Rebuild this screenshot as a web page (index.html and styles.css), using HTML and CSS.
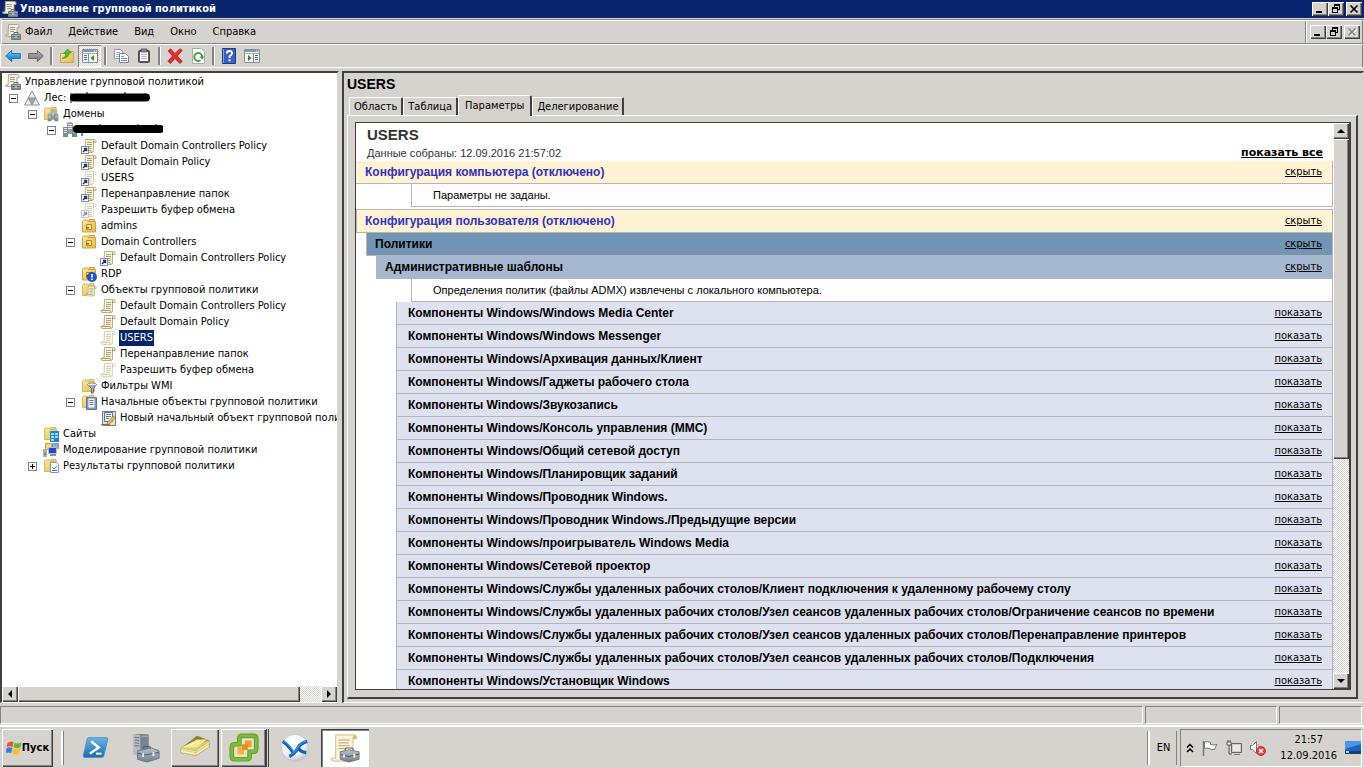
FILE: index.html
```html
<!DOCTYPE html>
<html lang="ru">
<head>
<meta charset="utf-8">
<title>Управление групповой политикой</title>
<link rel="stylesheet" href="styles.css">
</head>
<body>
<svg class="sprite" aria-hidden="true">
  <defs>
    <linearGradient id="gBlue" x1="0" y1="0" x2="0" y2="1"><stop offset="0" stop-color="#8fd6fb"/><stop offset=".5" stop-color="#2f9fe6"/><stop offset="1" stop-color="#0f6cb8"/></linearGradient>
    <linearGradient id="gGray" x1="0" y1="0" x2="0" y2="1"><stop offset="0" stop-color="#b5b5b5"/><stop offset="1" stop-color="#777"/></linearGradient>
    <linearGradient id="gFold" x1="0" y1="0" x2="1" y2="1"><stop offset="0" stop-color="#fbeaa5"/><stop offset="1" stop-color="#e2b74a"/></linearGradient>
    <linearGradient id="gSteel" x1="0" y1="0" x2="0" y2="1"><stop offset="0" stop-color="#b9c4cc"/><stop offset="1" stop-color="#6f7f8c"/></linearGradient>
    <linearGradient id="gPs" x1="0" y1="0" x2="0" y2="1"><stop offset="0" stop-color="#6fb4e2"/><stop offset="1" stop-color="#1a6aae"/></linearGradient>
    <radialGradient id="gBall" cx=".4" cy=".3" r=".8"><stop offset="0" stop-color="#fff"/><stop offset=".6" stop-color="#f0f1f3"/><stop offset="1" stop-color="#a9adb3"/></radialGradient>
  </defs>
  <symbol id="scroll" viewBox="0 0 16 16">
    <path d="M4.500 1.500h9q1.500 0 1.500 1.500v1.500h-2.500v8q0 2-1.500 2H3q-2 0-2-1.500V12h3z" fill="#fbf3d0" stroke="#b5ac88"/>
    <path d="M1.500 12.500h8.500q-.2 1.500 1 2" fill="none" stroke="#b5a05a"/>
    <path d="M6 4.500h5M6 6.500h5M6 8.500h4.500M6 10.500h4.500" stroke="#a5a294"/>
    <path d="M12.500 2.500v2" stroke="#8b825e"/>
  </symbol>
  <symbol id="gpmc" viewBox="0 0 16 16">
    <path d="M3.500.500h9q1.500 0 1.500 1.500v1.500h-2v9h-10q-1.500 0-1.500-1.500V11h2.500z" fill="#f7f1dc" stroke="#a8a394"/>
    <path d="M5 3.500h5M5 5.500h5M5 7.500h4" stroke="#9f9b90"/>
    <path d="M6.500 10.500h9v5h-9z" fill="url(#gSteel)" stroke="#6d7a85"/>
    <path d="M9 10V8.500h4V10" fill="none" stroke="#5f6b75"/>
    <path d="M7 12.500h8" stroke="#5b6670"/><path d="M10.500 12h1v2h-1z" fill="#f3f3f3"/>
  </symbol>
  <symbol id="link" viewBox="0 0 16 16">
    <rect x=".5" y="8.500" width="7" height="7" fill="#fff" stroke="#8d8d9a"/>
    <path d="M2 14l3-3M2.800 10.500h2.700v2.700" fill="none" stroke="#1d2d8c" stroke-width="1.500"/>
  </symbol>
  <symbol id="folder" viewBox="0 0 16 16">
    <path d="M1.500 3.500l1-1.500h4l1 1.500h6v10h-12z" fill="url(#gFold)" stroke="#d6b561"/>
    <path d="M8 1.500h5v2h-5z" fill="#f0d683" stroke="#d6b561"/>
  </symbol>
  <symbol id="ou" viewBox="0 0 16 16">
    <path d="M1.500 3.500l1-1.500h4l1 1.500h7v10.500h-13z" fill="url(#gFold)" stroke="#cfa23c"/>
    <path d="M8 1.500h5.500v2H8z" fill="#f0d683" stroke="#cfa23c"/>
    <path d="M5.500 6.500h5v5h-5z" fill="#fbe28a" stroke="#b38a1c"/><path d="M5 9h3v1.500H5z" fill="#8f6a10"/>
  </symbol>
  <symbol id="towers" viewBox="0 0 16 16">
    <path d="M5 1l3-1 3 1v11H5z" fill="#8d9ba3"/><path d="M6 2.500h4M6 4.500h4M6 6.500h4" stroke="#e8f0f2"/>
    <path d="M1 5h5v10H1z" fill="#7d8d96"/><path d="M2 6.500h3M2 8.500h3M2 10.500h3" stroke="#dbe8ea"/>
    <path d="M10 5h5v10h-5z" fill="#71828b"/><path d="M11 6.500h3M11 8.500h3M11 10.500h3" stroke="#dbe8ea"/>
    <path d="M3 12h2v2H3zM12 12h2v2h-2z" fill="#3fc43c"/>
  </symbol>
  <symbol id="pane" viewBox="0 0 16 16">
    <path d="M.5 1.500h15v13H.5z" fill="#f7f7f5" stroke="#8a9099"/><path d="M1 2h14v2H1z" fill="#7d98bd"/><path d="M1 5.500h14" stroke="#a9aeb5"/>
    <path d="M12 3h1M14 3h1" stroke="#fff"/>
  </symbol>
  <symbol id="restore" viewBox="0 0 10 10">
    <path d="M3.500 1v2M8.500 1v5M6.500 5.500h2M1.500 4v5M6.500 4v5M1 8.500h6" fill="none" stroke="#000"/><path d="M3 0h6v2H3zM1 3h6v2H1z"/>
  </symbol>
</svg>

<div class="window">
  <header class="titlebar">
    <svg class="ic"><use href="#gpmc"/></svg>
    <h1>Управление групповой политикой</h1>
    <div class="winbtns">
      <button class="wb" aria-label="Свернуть"><svg viewBox="0 0 10 10"><path d="M1 7h6v2H1z"/></svg></button>
      <button class="wb" aria-label="Восстановить"><svg viewBox="0 0 10 10"><use href="#restore"/></svg></button>
      <button class="wb apart" aria-label="Закрыть"><svg viewBox="0 0 10 10"><path d="M1.500 1.500l7 7M8.500 1.500l-7 7" stroke="#000" stroke-width="1.700"/></svg></button>
    </div>
  </header>

  <div class="menubar">
    <svg class="ic"><use href="#gpmc"/></svg>
    <nav class="menus">
      <button>Файл</button><button>Действие</button><button>Вид</button><button>Окно</button><button>Справка</button>
    </nav>
    <div class="winbtns mdi">
      <button class="wb" aria-label="Свернуть окно"><svg viewBox="0 0 10 10"><path d="M1 7h6v2H1z"/></svg></button>
      <button class="wb" aria-label="Восстановить окно"><svg viewBox="0 0 10 10"><use href="#restore"/></svg></button>
      <button class="wb apart" aria-label="Закрыть окно" disabled><svg viewBox="0 0 10 10"><path d="M2.500 2.500l7 7M9.500 2.500l-7 7" stroke="#fff" stroke-width="1.500"/><path d="M1.500 1.500l7 7M8.500 1.500l-7 7" stroke="#808080" stroke-width="1.500"/></svg></button>
    </div>
  </div>

  <div class="toolbar">
    <button aria-label="Назад"><svg class="ic" viewBox="0 0 16 16"><path d="M.7 8l6-5.500v3h8.600v5H6.700v3z" fill="url(#gBlue)" stroke="#1d74b5"/></svg></button>
    <button aria-label="Вперед"><svg class="ic" viewBox="0 0 16 16"><path d="M15.300 8l-6-5.500v3H.7v5h8.600v3z" fill="url(#gGray)" stroke="#666"/></svg></button>
    <span class="sep"></span>
    <button aria-label="Вверх"><svg class="ic" viewBox="0 0 16 16"><path d="M1.500 5.500h6l1-2h6v11h-13z" fill="url(#gFold)" stroke="#c9a655"/><path d="M3 10.500q4-1 4-5H4.500L8.500 1l4 4h-2.300Q10 10 3 10.500z" fill="#58b72f" stroke="#3f9626" stroke-width=".7"/></svg></button>
    <button class="pressed" aria-label="Дерево консоли"><svg class="ic" viewBox="0 0 16 16"><use href="#pane"/><path d="M6.500 6v8" stroke="#8a9099"/><path d="M2 7.500h3M2 9.500h3M2 11.500h3" stroke="#4776b5"/><path d="M12 7v6L8.500 10z" fill="#23912a"/></svg></button>
    <span class="sep"></span>
    <button aria-label="Копировать"><svg class="ic" viewBox="0 0 16 16"><path d="M1.500 1.500h6l2 2v7h-8z" fill="#fff" stroke="#8c97a8"/><path d="M3 4.500h4M3 6.500h5M3 8.500h5" stroke="#9db2cf"/><path d="M6.500 5.500h6l3 3v6h-9z" fill="#fff" stroke="#77869c"/><path d="M8 8.500h3M8 10.500h6M8 12.500h6" stroke="#6c8fc2"/></svg></button>
    <button aria-label="Вставить"><svg class="ic" viewBox="0 0 16 16"><rect x="2.500" y="2.500" width="11" height="12" rx="1" fill="#5e5e60" stroke="#4d4d4f"/><path d="M4 4h8v9H4z" fill="#f4f4f4"/><path d="M5.500 6.500h5M5.500 8.500h5M5.500 10.500h5" stroke="#b6b6b6"/><path d="M5 1h6v3H5z" fill="#8a8a8a" stroke="#444" stroke-width=".7"/></svg></button>
    <span class="sep"></span>
    <button aria-label="Удалить"><svg class="ic" viewBox="0 0 16 16"><path d="M1 3l2.500-2.200L8 5.500 13 .7 15.300 2.500 10.300 8l5 5.300-2.500 2.200L8 10.500l-4.500 5L.8 13.200 5.500 8z" fill="#e3302e" stroke="#a81512" stroke-width=".7"/></svg></button>
    <button aria-label="Обновить"><svg class="ic" viewBox="0 0 16 16"><path d="M2.500.5h9l3 3v12h-12z" fill="#fbfdfb" stroke="#a5b0a6"/><path d="M10.500 12.300A4 4 0 1 1 12.300 9" fill="none" stroke="#3da13a" stroke-width="1.800"/><path d="M9.500 8.500h5l-2.300 3.300z" fill="#3da13a"/></svg></button>
    <span class="sep"></span>
    <button aria-label="Справка"><svg class="ic" viewBox="0 0 16 16"><path d="M1.500.5h13v15h-13z" fill="#3c5fc4" stroke="#22398a"/><path d="M2.500 1v14" stroke="#8aa3e8"/><path d="M5.800 5.500q0-2.500 2.700-2.500t2.600 2.300Q11 6.800 8.600 8.300V10" fill="none" stroke="#fff" stroke-width="1.800"/><path d="M7.600 11.300h2v2h-2z" fill="#fff"/></svg></button>
    <button aria-label="Панель действий"><svg class="ic" viewBox="0 0 16 16"><use href="#pane"/><path d="M9.500 6v8" stroke="#8a9099"/><path d="M11 7.500h3M11 9.500h3M11 11.500h3" stroke="#4776b5"/><path d="M4 7v6l3.500-3z" fill="#23912a"/></svg></button>
  </div>

  <main class="content">
    <section class="treepane">
      <ul class="tree">
        <li><div class="node"><svg class="ic"><use href="#gpmc"/></svg><span>Управление групповой политикой</span></div>
        <ul class="root">
          <li><div class="node"><button class="exp" aria-label="Свернуть ветвь"></button><svg class="ic" viewBox="0 0 16 16"><path d="M8 .8L.6 15h14.800z" fill="#eceeef" stroke="#8b9197"/><path d="M4.300 8h7.400L8 15z" fill="#a4a9ad" stroke="#8b9197"/></svg><span>Лес:</span><svg class="ink forest" viewBox="0 0 82 12"><path d="M1 1v10" stroke="#000"/><path d="M4 5.500h72" stroke="#000" stroke-width="8" stroke-linecap="round"/><path d="M17 3V0M55 3V0M75 5V1" stroke="#000"/></svg></div>
          <ul>
            <li><div class="node"><button class="exp" aria-label="Свернуть ветвь"></button><svg class="ic" viewBox="0 0 16 16"><use href="#folder"/><use href="#towers" x="4" y="4" width="12" height="12"/></svg><span>Домены</span></div>
            <ul>
              <li><div class="node"><button class="exp" aria-label="Свернуть ветвь"></button><svg class="ic"><use href="#towers"/></svg><svg class="ink domain" viewBox="0 0 90 12"><path d="M4 5h83" stroke="#000" stroke-width="8" stroke-linecap="round"/><path d="M9 8v4M27 3V0M65 3V0M83 3V0" stroke="#000"/></svg></div>
              <ul>
                <li><div class="node leaf"><svg class="ic"><use href="#scroll"/><use href="#link"/></svg><span>Default Domain Controllers Policy</span></div></li>
                <li><div class="node leaf"><svg class="ic"><use href="#scroll"/><use href="#link"/></svg><span>Default Domain Policy</span></div></li>
                <li><div class="node leaf"><svg class="ic"><use href="#scroll" class="pale"/><use href="#link"/></svg><span>USERS</span></div></li>
                <li><div class="node leaf"><svg class="ic"><use href="#scroll"/><use href="#link"/></svg><span>Перенаправление папок</span></div></li>
                <li><div class="node leaf"><svg class="ic pale"><use href="#scroll"/><use href="#link"/></svg><span>Разрешить буфер обмена</span></div></li>
                <li><div class="node leaf"><svg class="ic"><use href="#ou"/></svg><span>admins</span></div></li>
                <li><div class="node"><button class="exp" aria-label="Свернуть ветвь"></button><svg class="ic"><use href="#ou"/></svg><span>Domain Controllers</span></div>
                <ul>
                  <li><div class="node leaf"><svg class="ic"><use href="#scroll"/><use href="#link"/></svg><span>Default Domain Controllers Policy</span></div></li>
                </ul></li>
                <li><div class="node leaf"><svg class="ic" viewBox="0 0 16 16"><use href="#ou"/><circle cx="11" cy="11" r="4.700" fill="#1e56cf" stroke="#123a94" stroke-width=".6"/><path d="M10.200 8h1.600v3.500h-1.600zM10.200 12.500h1.600V14h-1.600z" fill="#fff"/></svg><span>RDP</span></div></li>
                <li><div class="node"><button class="exp" aria-label="Свернуть ветвь"></button><svg class="ic" viewBox="0 0 16 16"><use href="#folder"/><use href="#scroll" x="4" y="3" width="12" height="12"/></svg><span>Объекты групповой политики</span></div>
                <ul>
                  <li><div class="node leaf"><svg class="ic"><use href="#scroll"/></svg><span>Default Domain Controllers Policy</span></div></li>
                  <li><div class="node leaf"><svg class="ic"><use href="#scroll"/></svg><span>Default Domain Policy</span></div></li>
                  <li><div class="node leaf"><svg class="ic pale"><use href="#scroll"/></svg><span class="selected">USERS</span></div></li>
                  <li><div class="node leaf"><svg class="ic"><use href="#scroll"/></svg><span>Перенаправление папок</span></div></li>
                  <li><div class="node leaf"><svg class="ic pale"><use href="#scroll"/></svg><span>Разрешить буфер обмена</span></div></li>
                </ul></li>
                <li><div class="node leaf"><svg class="ic" viewBox="0 0 16 16"><use href="#folder"/><path d="M6.500 6.500h9l-3 4v4l-2 1v-5z" fill="#aab8c6" stroke="#5d6c7a"/><ellipse cx="11" cy="6.500" rx="4.500" ry="1.500" fill="#e6edf3" stroke="#5d6c7a" stroke-width=".7"/></svg><span>Фильтры WMI</span></div></li>
                <li><div class="node"><button class="exp" aria-label="Свернуть ветвь"></button><svg class="ic" viewBox="0 0 16 16"><use href="#folder"/><path d="M5.500 3.500h10v12h-10z" fill="#7f97bd" stroke="#5d7398"/><path d="M7.500 4.500h6v9h-6z" fill="#fff"/><path d="M8.500 6.500h4M8.500 8.500h4M8.500 10.500h4" stroke="#5b7dad"/></svg><span>Начальные объекты групповой политики</span></div>
                <ul>
                  <li><div class="node leaf"><svg class="ic" viewBox="0 0 16 16"><path d="M2.500 1.500h13v14h-13z" fill="#e6e3dc" stroke="#7f7a73"/><path d="M4.500 2.500h8v9h-8z" fill="#fff" stroke="#5074b0"/><path d="M6 4.500h5M6 6.500h5M6 8.500h3" stroke="#5b7dad"/><path d="M1 14.500h9" stroke="#b5574d"/><path d="M13 6l2 1.500-5.500 6.500-2.500 1 .5-2.500z" fill="#f0c24d" stroke="#8e6a1c" stroke-width=".7"/></svg><span>Новый начальный объект групповой политики</span></div></li>
                </ul></li>
              </ul></li>
            </ul></li>
            <li><div class="node leaf"><svg class="ic" viewBox="0 0 16 16"><use href="#folder"/><path d="M7 5h9v11H7z" fill="#1f86c4"/><path d="M8 7h3v2H8zM12 7h3v2h-3zM8 10h3v2H8zM12 10h3v2h-3zM8 13h3v2H8z" fill="#9fdcf8"/></svg><span>Сайты</span></div></li>
            <li><div class="node leaf"><svg class="ic" viewBox="0 0 16 16"><path d="M2.500 1.500h6v6h-6z" fill="#f1d98a" stroke="#bf9c42"/><path d="M9.500 1.500h6v5h-6z" fill="#8fa8e2" stroke="#8a94b0"/><path d="M5.500 5.500h8v6h-8z" fill="#2946c4" stroke="#b5bccb"/><path d="M7 12h6v2H7z" fill="#8792a5"/><path d="M0 7h4v8H0z" fill="#a9b2a6"/><path d="M1 11h2v2H1z" fill="#3fae3c"/></svg><span>Моделирование групповой политики</span></div></li>
            <li><div class="node"><button class="exp plus" aria-label="Развернуть ветвь"></button><svg class="ic" viewBox="0 0 16 16"><use href="#folder"/><path d="M7.500 4.500h6l2 2v8h-8z" fill="#fff" stroke="#8c9aab"/><path d="M9 9l2 2 3-3.500M9 12.500h5" fill="none" stroke="#2e86c9"/></svg><span>Результаты групповой политики</span></div></li>
          </ul></li>
        </ul></li>
      </ul>
      <div class="hscroll">
        <button class="sb" aria-label="Влево"><svg viewBox="0 0 8 8"><path d="M6 0v8L2 4z"/></svg></button>
        <div class="track"><div class="thumb"></div></div>
        <button class="sb" aria-label="Вправо"><svg viewBox="0 0 8 8"><path d="M2 0v8l4-4z"/></svg></button>
      </div>
    </section>

    <section class="detail">
      <h2>USERS</h2>
      <div class="tabs" role="tablist">
        <button role="tab">Область</button><button role="tab">Таблица</button><button role="tab" class="active" aria-selected="true">Параметры</button><button role="tab">Делегирование</button>
      </div>
      <div class="tabpage">
        <div class="reportbox">
          <article class="report">
            <div class="rhead">
              <h3>USERS</h3>
              <p>Данные собраны: 12.09.2016 21:57:02</p>
              <a href="#" class="all">показать все</a>
            </div>
            <div class="bar cfg first"><b>Конфигурация компьютера (отключено)</b><a href="#">скрыть</a></div>
            <div class="bar note end">Параметры не заданы.</div>
            <div class="bar cfg next"><b>Конфигурация пользователя (отключено)</b><a href="#">скрыть</a></div>
            <div class="bar pol"><b>Политики</b><a href="#">скрыть</a></div>
            <div class="bar adm"><b>Административные шаблоны</b><a href="#">скрыть</a></div>
            <div class="bar note">Определения политик (файлы ADMX) извлечены с локального компьютера.</div>
            <div class="bar item"><b>Компоненты Windows/Windows Media Center</b><a href="#">показать</a></div>
            <div class="bar item"><b>Компоненты Windows/Windows Messenger</b><a href="#">показать</a></div>
            <div class="bar item"><b>Компоненты Windows/Архивация данных/Клиент</b><a href="#">показать</a></div>
            <div class="bar item"><b>Компоненты Windows/Гаджеты рабочего стола</b><a href="#">показать</a></div>
            <div class="bar item"><b>Компоненты Windows/Звукозапись</b><a href="#">показать</a></div>
            <div class="bar item"><b>Компоненты Windows/Консоль управления (MMC)</b><a href="#">показать</a></div>
            <div class="bar item"><b>Компоненты Windows/Общий сетевой доступ</b><a href="#">показать</a></div>
            <div class="bar item"><b>Компоненты Windows/Планировщик заданий</b><a href="#">показать</a></div>
            <div class="bar item"><b>Компоненты Windows/Проводник Windows.</b><a href="#">показать</a></div>
            <div class="bar item"><b>Компоненты Windows/Проводник Windows./Предыдущие версии</b><a href="#">показать</a></div>
            <div class="bar item"><b>Компоненты Windows/проигрыватель Windows Media</b><a href="#">показать</a></div>
            <div class="bar item"><b>Компоненты Windows/Сетевой проектор</b><a href="#">показать</a></div>
            <div class="bar item"><b>Компоненты Windows/Службы удаленных рабочих столов/Клиент подключения к удаленному рабочему столу</b><a href="#">показать</a></div>
            <div class="bar item"><b>Компоненты Windows/Службы удаленных рабочих столов/Узел сеансов удаленных рабочих столов/Ограничение сеансов по времени</b><a href="#">показать</a></div>
            <div class="bar item"><b>Компоненты Windows/Службы удаленных рабочих столов/Узел сеансов удаленных рабочих столов/Перенаправление принтеров</b><a href="#">показать</a></div>
            <div class="bar item"><b>Компоненты Windows/Службы удаленных рабочих столов/Узел сеансов удаленных рабочих столов/Подключения</b><a href="#">показать</a></div>
            <div class="bar item"><b>Компоненты Windows/Установщик Windows</b><a href="#">показать</a></div>
          </article>
          <div class="vscroll">
            <button class="sb" aria-label="Вверх"><svg viewBox="0 0 8 8"><path d="M0 6h8L4 2z"/></svg></button>
            <div class="track"><div class="thumb"></div></div>
            <button class="sb" aria-label="Вниз"><svg viewBox="0 0 8 8"><path d="M0 2h8L4 6z"/></svg></button>
          </div>
        </div>
      </div>
    </section>
  </main>

  <div class="status"><span class="wide"></span><span class="mid"></span><span class="small"></span></div>
</div>

<footer class="taskbar">
  <button class="start"><svg viewBox="0 0 16 16"><path d="M1.500 3Q4.500.5 7.500 2L6.500 7Q4 5.500.8 7z" fill="#e8562a"/><path d="M8.500 2.500Q11.500 4.500 15.500 2.500L14.500 7.500Q11 9 7.500 7.500z" fill="#6fb536"/><path d="M.6 8Q3.500 6.500 6.300 8L5.200 13Q2.500 12-.2 13z" fill="#3c7ee0"/><path d="M7.200 8.500Q10.500 10.200 14.300 8.500L13 14Q9.500 15.500 6 13.500z" fill="#f6c02c"/></svg>Пуск</button>
  <span class="grip"></span>
  <div class="apps">
    <button aria-label="Windows PowerShell"><svg viewBox="0 0 32 32"><path d="M9 5h19q2 0 1.500 2l-4 17q-.5 2-2.500 2H5q-2 0-1.500-2l4-17Q8 5 9 5z" fill="url(#gPs)" stroke="#4a90c6"/><path d="M12 9l8 6.500-9.500 6.500" fill="none" stroke="#fff" stroke-width="2.500"/><path d="M17 22h6" stroke="#fff" stroke-width="2"/></svg></button>
    <button aria-label="Диспетчер сервера"><svg viewBox="0 0 32 32"><path d="M4 1h9l7 .500v20l-7 3-9-2z" fill="#78848e"/><path d="M4 1l7 1v22l-7-2z" fill="#b4bdc4"/><path d="M5 4.500l5 .5M5 7.500l5 .5M5 10.500l5 .5M5 13.500l5 .5" stroke="#65707a"/><path d="M12 3.500h7" stroke="#a6b0b8"/><path d="M8 19l15-3 8 3v8l-13 4-10-3z" fill="url(#gSteel)" stroke="#6b7782"/><path d="M14 17q0-2.500 2-2.500h4q2 0 2 2M8 21.500l9 2 14-3" fill="none" stroke="#55616c" stroke-width="1.200"/><path d="M13 21.500h2v4h-2zM24 20.500h2v4h-2z" fill="#e9eef2"/></svg></button>
    <button class="up" aria-label="Заметки"><svg viewBox="0 0 32 32"><path d="M1 16L13 8h18v7L17 24 1 21z" fill="#d9cd71" stroke="#a59b55" stroke-width=".8"/><path d="M1 16l16 3L31 9v6L17 24 1 21z" fill="#f7f1bd" stroke="#b9b06a" stroke-width=".7"/><path d="M17 19v5M1.500 18l15.500 3 14-9.500" fill="none" stroke="#c0b46a" stroke-width=".7"/><path d="M4 14.500L18 3l12 4.500-12 7q-5-2-14 0z" fill="#8f7b2c"/><path d="M2 15.500L18 7h11l-11 8.500z" fill="#f5e992"/><path d="M5 15L22 8" stroke="#fff9cf"/></svg></button>
    <button class="up stack" aria-label="vSphere Client"><svg viewBox="0 0 32 32"><path d="M14 3h12q3 0 3 3v11q0 3-3 3h-4v5q0 3-3 3H6q-3 0-3-3V15q0-3 3-3h5V6q0-3 3-3z" fill="#dfe5d8" stroke="#5f9b25" stroke-width="5"/><path d="M14 3h12q3 0 3 3v11q0 3-3 3h-4v5q0 3-3 3H6q-3 0-3-3V15q0-3 3-3h5V6q0-3 3-3z" fill="none" stroke="#7dbb3b" stroke-width="3"/><path d="M17 8h7v7h-7z" fill="#f39a1d"/><path d="M9 15h7v8H9z" fill="#f7b23c"/><path d="M14 12h6v6h-6z" fill="#ea8b13"/></svg></button>
    <button aria-label="Браузер"><svg viewBox="0 0 32 32"><circle cx="16" cy="16" r="14.500" fill="url(#gBall)" stroke="#c5c8cc"/><path d="M3 9q6 4 11 12M10 25q6-3 9-9 3-5 10-7M19 15q2 5 9 6" fill="none" stroke="#1560b8" stroke-width="3.500"/><path d="M4 8.500q6 4 10.500 11.500M12 23q5-3 7-8 4-5 9-6.500" fill="none" stroke="#3d93e0" stroke-width="1.200"/></svg></button>
    <button class="on" aria-label="Управление групповой политикой"><svg viewBox="0 0 32 32"><path d="M6 2h20q3 0 2.500 4h-4v20q0 4-4 4H4q-3 0-3-3h5z" fill="#fbf2cf" stroke="#cdbf8e"/><path d="M24 6q.5-4 2-4 3 0 2.500 4z" fill="#d3bf7c"/><path d="M9 7.500h12M9 10.500h11M9 13.500h12M9 16.500h8" stroke="#a8a28c"/><path d="M11 20l9-2 11 2v8l-11 3-9-3z" fill="url(#gSteel)" stroke="#6b7782"/><path d="M16 18.500q0-2.500 2-2.500h5q2 0 2 2.500M11 23l9 2 11-2.500" fill="none" stroke="#55616c" stroke-width="1.200"/><path d="M14 23h2v3h-2zM25 22h2v4h-2z" fill="#eef2f5"/></svg></button>
  </div>
  <div class="lang">EN</div>
  <div class="tray">
    <svg class="chev" viewBox="0 0 8 10"><path d="M1 4.500l3-3 3 3M1 9l3-3 3 3" fill="none" stroke="#000" stroke-width="1.500"/></svg>
    <svg class="ic" viewBox="0 0 16 16"><path d="M1.500 1v15" stroke="#777" stroke-width="1.500"/><path d="M2.500 2q3-1 6 .5v2q3 1 6.500 0-2 3-2.500 5-3 .5-5.500-1-2-1-4.500 0z" fill="#fff" stroke="#777"/></svg>
    <svg class="ic" viewBox="0 0 16 16"><path d="M5.500 3.500h10v9h-10z" fill="#c9ccd0" stroke="#666"/><path d="M7 5h7v6H7z" fill="#e9ebee"/><path d="M8 14.500h6" stroke="#777"/><path d="M2 0v2M4 0v2M3 5v9h3" fill="none" stroke="#555"/><path d="M1 2h4v3H1z" fill="#fff" stroke="#555"/></svg>
    <svg class="ic" viewBox="0 0 16 16"><path d="M.5 5.500h2l4-4v12l-4-4h-2z" fill="#fff" stroke="#777"/><path d="M8.500 4q2 3 0 7" fill="none" stroke="#999"/><circle cx="11" cy="11" r="4.500" fill="#e23b36" stroke="#b31c18" stroke-width=".7"/><path d="M9 9l4 4M13 9l-4 4" stroke="#fff" stroke-width="1.500"/></svg>
    <div class="clock"><span>21:57</span><span>12.09.2016</span></div>
    <svg class="desk" viewBox="0 0 16 13"><path d="M0 0h16v11H0z" fill="#2263bd"/><path d="M0 0h16v3L0 8z" fill="#4d97e0"/><path d="M0 10h16v3H0z" fill="#173c78"/><path d="M1 10h3v2H1z" fill="#8ed3f5"/></svg>
  </div>
</footer>
</body>
</html>
```
FILE: styles.css
```css
* { box-sizing: border-box; }

:root {
  --face: #d6d3ce;
  --dark: #404040;
  --shade: #848284;
  --navy: #08246b;
  --rule: #b5b5b8;
  --ui: "DejaVu Sans Condensed", "Noto Sans", sans-serif;
  --doc: "Liberation Sans", Arial, sans-serif;
}

body {
  margin: 0;
  height: 100vh;
  display: flex;
  flex-direction: column;
  overflow: hidden;
  background: var(--face);
  color: #000;
  font: 11px/16px var(--ui);
}

h1, h2, h3, p, ul { margin: 0; padding: 0; }
ul { list-style: none; }
a { color: inherit; }
button { font: inherit; color: inherit; margin: 0; padding: 0; border: 0; background: none; }
svg { display: block; flex: none; }
.sprite { position: absolute; width: 0; height: 0; }
.ic { width: 16px; height: 16px; }
.pale { opacity: .5; }

.window { flex: 1; min-height: 0; display: flex; flex-direction: column; }

.titlebar {
  display: flex;
  align-items: center;
  gap: 2px;
  height: 18px;
  padding: 0 2px;
  background: var(--navy);
  color: #fff;
}
.titlebar h1 { flex: 1; font-size: 11px; line-height: 16px; font-weight: bold; }

.winbtns { display: flex; }
.wb {
  width: 16px;
  height: 14px;
  display: grid;
  place-items: center;
  background: var(--face);
  box-shadow: inset 1px 1px #fff, inset -1px -1px var(--dark), inset -2px -2px var(--shade);
}
.wb svg { width: 10px; height: 10px; }
.apart { margin-left: 2px; }

.menubar {
  display: flex;
  align-items: center;
  height: 25px;
  margin: 1px 1px 0 1px;
  padding: 1px 0 0 3px;
  border: 1px solid var(--shade);
  border-left-color: #fff;
  box-shadow: inset 0 1px #fff;
}
.menus { flex: 1; display: flex; gap: 16px; padding-left: 4px; }
.mdi {
  align-self: stretch;
  align-items: center;
  padding: 0 2px 0 3px;
  border-left: 1px solid #fff;
  box-shadow: -1px 0 var(--shade);
}

.toolbar {
  display: flex;
  align-items: center;
  height: 24px;
  margin: 0 1px 0 0;
  border: solid;
  border-width: 1px;
  border-color: #fff var(--shade) #fff #fff;
}
.toolbar button { width: 23px; height: 22px; display: grid; place-items: center; }
.toolbar .pressed {
  background: repeating-conic-gradient(#fff 0 25%, var(--face) 0 50%) 0 0 / 2px 2px;
  box-shadow: inset 1px 1px var(--shade), inset -1px -1px #fff;
}
.sep { width: 8px; display: flex; justify-content: center; }
.sep::before { content: ""; width: 2px; height: 18px; background: var(--shade); border-right: 1px solid #fff; }

.content { flex: 1; min-height: 0; display: flex; gap: 3px; margin-top: 3px; }

.treepane {
  width: 339px;
  flex: none;
  display: flex;
  flex-direction: column;
  background: #fff;
  border: solid;
  border-width: 2px 2px 1px;
  border-color: var(--dark) var(--face) #fff var(--dark);
}
.tree { flex: 1; min-height: 0; overflow: hidden; padding: 1px 0 0 3px; white-space: nowrap; }
.tree ul { padding-left: 19px; }
.tree ul.root { padding-left: 0; }
.node { display: flex; align-items: center; height: 16px; }
.node.leaf { padding-left: 19px; }
.node span { margin-left: 3px; padding: 0 1px; }
.node .selected { background: var(--navy); color: #fff; }
.exp {
  width: 9px;
  height: 9px;
  margin: 0 6px 0 4px;
  border: 1px solid var(--shade);
  background: linear-gradient(#000, #000) center / 5px 1px no-repeat #fff;
}
.exp.plus {
  background: linear-gradient(#000, #000) center / 5px 1px no-repeat,
    linear-gradient(#000, #000) center / 1px 5px no-repeat #fff;
}
.ink { height: 12px; }
.ink.forest { width: 82px; margin-left: 3px; }
.ink.domain { width: 90px; margin-left: -5px; }

.hscroll { display: flex; height: 16px; background: var(--face); }
.vscroll { display: flex; flex-direction: column; width: 16px; background: var(--face); }
.sb {
  width: 16px;
  height: 16px;
  flex: none;
  display: grid;
  place-items: center;
}
.sb svg { width: 8px; height: 8px; }
.sb, .thumb, .start, .apps .up {
  background: var(--face);
  box-shadow: inset 1px 1px #fff, inset -1px -1px var(--dark), inset -2px -2px var(--shade);
}
.track {
  flex: 1;
  background: repeating-conic-gradient(#fff 0 25%, var(--face) 0 50%) 0 0 / 2px 2px;
}
.hscroll .thumb { width: 93%; height: 16px; }
.vscroll .thumb { width: 16px; height: 60%; }

.detail {
  flex: 1;
  min-width: 0;
  display: flex;
  flex-direction: column;
  padding: 3px 4px 3px 3px;
  border: solid;
  border-width: 2px 2px 1px 2px;
  border-color: var(--dark) var(--face) #fff var(--dark);
}
.detail h2 { font: bold 14px/16px var(--doc); }
.tabs { display: flex; align-items: flex-end; padding-left: 2px; height: 23px; }
.tabs button {
  height: 18px;
  padding: 0 4px;
  border: solid;
  border-width: 1px 2px 0 1px;
  border-color: #fff var(--dark) #fff #fff;
  border-radius: 2px 2px 0 0;
}
.tabs .active {
  height: 21px;
  padding: 0 6px;
  margin-bottom: -1px;
  background: var(--face);
  position: relative;
}
.tabpage {
  flex: 1;
  min-height: 0;
  display: flex;
  padding: 6px 5px 7px 7px;
  border: solid;
  border-width: 1px 2px 2px 1px;
  border-color: #fff var(--dark) var(--dark) #fff;
}
.reportbox {
  flex: 1;
  min-width: 0;
  display: flex;
  background: #fff;
  border: solid;
  border-width: 1px 2px 1px 1px;
  border-color: var(--dark);
}
.report { flex: 1; min-width: 0; overflow: hidden; font: 11px/16px var(--doc); }

.rhead {
  display: grid;
  grid-template-columns: 1fr auto;
  align-items: end;
  padding: 3px 10px 0 11px;
  color: #333;
}
.rhead h3 { grid-column: 1 / 3; font-size: 15px; line-height: 18px; }
.rhead p { font-size: 11px; line-height: 16px; padding-top: 1px; }
.rhead .all { color: #000; font: bold 11px/16px "DejaVu Sans", sans-serif; }

.bar {
  display: flex;
  justify-content: space-between;
  align-items: center;
  height: 23px;
  padding-right: 10px;
  border: solid var(--rule);
  border-width: 0 1px 1px;
}
.bar b { font-size: 12px; }
.bar a { font: 11px/16px "DejaVu Sans Condensed", sans-serif; }
.cfg { padding-left: 8px; background: #fff3d4; color: #3331c0; }
.cfg a { color: #000; }
.first { border-left: 0; padding-left: 9px; }
.next { height: 24px; border-top-width: 1px; margin-top: 2px; }
.pol { margin-left: 10px; padding-left: 8px; background: #7395b5; }
.adm { margin-left: 20px; padding-left: 8px; background: #a5b8d0; }
.note { margin-left: 55px; padding-left: 21px; background: #fffcff; }
.item { margin-left: 40px; padding-left: 11px; background: #dee1ef; }

.status { display: flex; gap: 2px; height: 22px; padding: 2px 2px 1px 0; margin-top: 1px; border-bottom: 1px solid #fff; }
.status span { border: 1px solid #fff; border-top-color: var(--shade); border-left-color: var(--shade); }
.status .wide { flex: 1; }
.status .mid { width: 132px; }
.status .small { width: 83px; }

.taskbar {
  display: flex;
  align-items: center;
  height: 42px;
  padding: 0 2px;
  border-top: 1px solid #fff;
}
.start { width: 51px; height: 38px; display: flex; align-items: center; justify-content: center; font-weight: bold; }
.start svg { width: 16px; height: 16px; }
.grip { width: 3px; height: 34px; margin: 0 7px 0 8px; background: #fff; border-right: 1px solid var(--shade); }
.apps { flex: 1; display: flex; gap: 2px; }
.apps button { width: 48px; height: 38px; display: grid; place-items: center; }
.apps svg { width: 30px; height: 30px; }
.apps .stack { border-right: 3px double var(--dark); }
.apps .on {
  background: #fff;
  box-shadow: inset 1px 1px var(--dark), inset 2px 2px var(--shade), inset -1px -1px #fff;
}
.lang { border-left: 2px solid #fff; box-shadow: -1px 0 var(--shade); padding: 9px 6px 9px 7px; border-right: 1px solid var(--shade); }
.tray {
  display: flex;
  align-items: center;
  gap: 8px;
  height: 38px;
  margin-left: 3px;
  padding-left: 5px;
  border: 1px solid #fff;
  border-top-color: var(--shade);
  border-left-color: var(--shade);
}
.chev { width: 8px; height: 10px; }
.clock { display: flex; flex-direction: column; text-align: center; padding-left: 6px; }
.desk { width: 16px; height: 13px; }
```
